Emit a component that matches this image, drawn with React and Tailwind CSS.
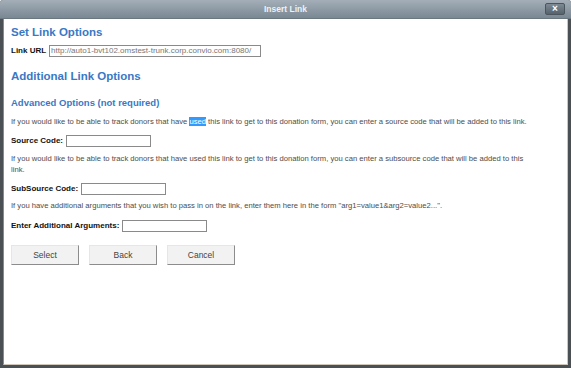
import React from 'react';

const font = { fontFamily: '"Liberation Sans", Arial, sans-serif' };

const Field = ({ label, width = 'w-[85px]' }) => (
    <div className="flex items-center gap-[3px] text-[8px] font-bold text-[#111]">
        <span>{label}</span>
        <input className={`${width} h-[12px] border border-[#8a8a8a] bg-white outline-none`} />
    </div>
);

const Button = ({ children }) => (
    <button className="w-[68px] h-[20px] bg-[#f2f2f2] border border-t-[#e6e6e6] border-l-[#e6e6e6] border-r-[#8c8c8c] border-b-[#8c8c8c] text-[8.5px] text-[#444]">
        {children}
    </button>
);

const App = () => {
    return (
        <div className="w-[571px] h-[368px] bg-[#4b5055] flex flex-col rounded-t-[3px] overflow-hidden" style={font}>
            <div className="h-[19px] shrink-0 flex items-center relative bg-gradient-to-b from-[#a3aeb8] to-[#7a8893] border-b border-[#6b7780]">
                <div className="flex-1 text-center text-[8.5px] font-bold text-[#eef1f3]">Insert Link</div>
                <div className="absolute right-[6px] top-[3px] w-[20px] h-[12px] rounded-[2px] bg-gradient-to-b from-[#7d8a94] to-[#56636c] border border-[#4a555d] flex items-center justify-center text-white text-[10px] font-bold leading-none">
                    ×
                </div>
            </div>
            <div className="flex-1 flex px-[3px] pb-[3px]">
                <div className="flex-1 bg-white border-r border-b border-[#cfc6bc] border-l border-l-[#8a8a8a] pl-[7px] pt-[5px]">
                    <h1 className="text-[11.5px] font-bold text-[#3a78c5] leading-[16px]">Set Link Options</h1>
                    <div className="flex items-center gap-[3px] mt-[5px] text-[8px]">
                        <span className="font-bold text-[#111]">Link URL</span>
                        <div className="w-[212px] h-[12px] border border-[#8a8a8a] overflow-hidden whitespace-nowrap text-[#777] leading-[10px] px-[1px]">
                            http://auto1-bvt102.omstest-trunk.corp.convio.com:8080/
                        </div>
                    </div>

                    <h2 className="text-[11.5px] font-bold text-[#3a78c5] leading-[16px] mt-[11px]">Additional Link Options</h2>
                    <h3 className="text-[9.5px] font-bold text-[#3a78c5] leading-[14px] mt-[12px]">Advanced Options (not required)</h3>

                    <p className="text-[7.65px] text-[#4d4d4d] leading-[11px] mt-[6px] w-[521px]">
                        If you would like to be able to track donors that have <span className="bg-[#3399ff] text-white">used</span> this link to get to this donation form, you can enter a source code that will be added to this link.
                    </p>
                    <div className="mt-[8px]">
                        <Field label="Source Code:" />
                    </div>

                    <p className="text-[7.65px] text-[#4d4d4d] leading-[11px] mt-[6px] w-[521px]">
                        If you would like to be able to track donors that have used this link to get to this donation form, you can enter a subsource code that will be added to this link.
                    </p>
                    <div className="mt-[8px]">
                        <Field label="SubSource Code:" />
                    </div>

                    <p className="text-[7.65px] text-[#4d4d4d] leading-[11px] mt-[5px] w-[521px]">
                        If you have additional arguments that you wish to pass in on the link, enter them here in the form "arg1=value1&amp;arg2=value2...".
                    </p>
                    <div className="mt-[9px]">
                        <Field label="Enter Additional Arguments:" />
                    </div>

                    <div className="flex gap-[10px] mt-[13px]">
                        <Button>Select</Button>
                        <Button>Back</Button>
                        <Button>Cancel</Button>
                    </div>
                </div>
            </div>
        </div>
    );
};

export default App;
